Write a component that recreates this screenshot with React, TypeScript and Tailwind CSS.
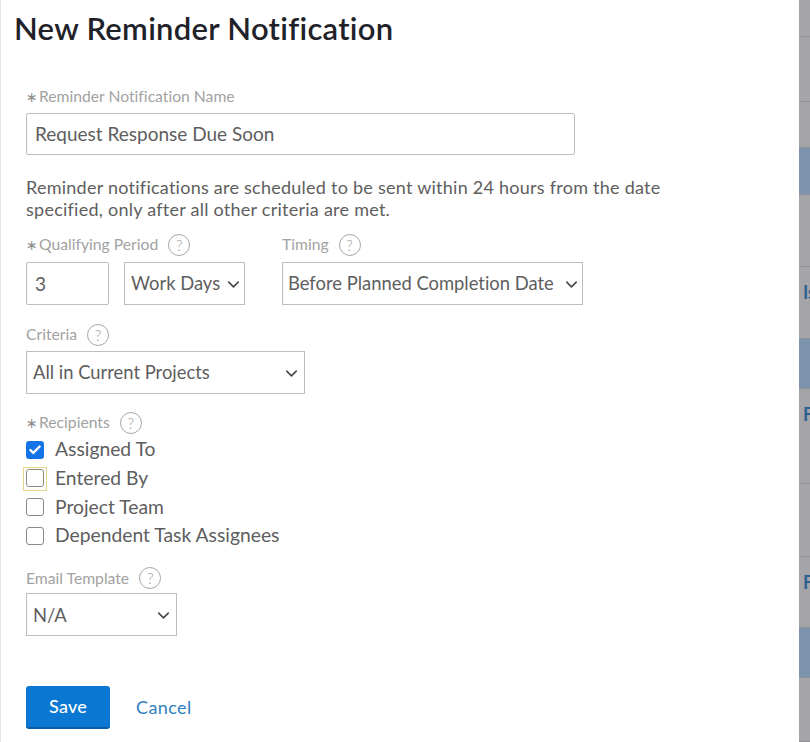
import { ChevronDown, Check } from "lucide-react";

function Help({ className = "" }: { className?: string }) {
  return (
    <span className={"flex h-[22px] w-[22px] shrink-0 items-center justify-center rounded-full border border-[#a8a8a8] text-[15px] leading-none font-light text-[#9a9a9a] " + className}>
      ?
    </span>
  );
}

function Label({ text, required, help = true }: { text: string; required?: boolean; help?: boolean }) {
  return (
    <div className="flex h-[22px] items-center whitespace-nowrap text-[15.7px] leading-none text-[#a2a2a2]">
      {required && <span className="mr-[4px] w-[9px] font-['DejaVu_Sans',sans-serif] text-[14px] text-[#8c8c8c]">∗</span>}
      <span>{text}</span>
      {help && <Help className="ml-[10px]" />}
    </div>
  );
}

function Select({ value, className, pad }: { value: string; className: string; pad: string }) {
  return (
    <div className={"flex h-[43px] items-center justify-between border border-[#bdbdbd] bg-white pt-[1px] text-[18.4px] whitespace-nowrap text-[#5e5e5e] " + pad + " " + className}>
      <span>{value}</span>
      <ChevronDown size={19} strokeWidth={2} className="text-[#484848]" />
    </div>
  );
}

function CheckRow({ label, checked, focused }: { label: string; checked?: boolean; focused?: boolean }) {
  return (
    <div className="flex h-[28.6px] items-center text-[19.3px] whitespace-nowrap text-[#5e5e5e]">
      <span className={"flex h-[24px] w-[24px] -ml-[3px] mr-[8px] items-center justify-center border " + (focused ? "border-[#e8d48a]" : "border-transparent")}>
        {checked ? (
          <span className="-mt-[1px] flex h-[18px] w-[18px] items-center justify-center rounded-[3px] bg-[#1473e6]">
            <Check size={14} strokeWidth={4} className="text-white" />
          </span>
        ) : (
          <span className="-mt-[1px] h-[18px] w-[18px] rounded-[3px] border border-[#8a8a8a] bg-white" />
        )}
      </span>
      <span className="-mt-[1px]">{label}</span>
    </div>
  );
}

export default function App() {
  const rows = [
    { h: "h-[37px]" },
    { h: "h-[65px]" },
    { h: "h-[46px]" },
    { h: "h-[47px]", blue: true },
    { h: "h-[72px]" },
    { h: "h-[72px]", text: "Is" },
    { h: "h-[50px]", blue: true },
    { h: "h-[95px]", text: "F" },
    { h: "h-[73px]" },
    { h: "h-[71px]", text: "F" },
    { h: "h-[50px]", blue: true },
    { h: "h-[64px]" },
  ];

  return (
    <div className="flex h-[742px] w-[810px] overflow-hidden bg-white font-['Lato','Open_Sans',sans-serif] [font-variant-ligatures:none]">
      <div className="h-full w-[799px] shrink-0 border-l border-[#e4e4e4] bg-white pl-[25px] shadow-[1px_0_3px_rgba(0,0,0,0.25)]">
        <h1 className="-ml-[12px] pt-[9px] text-[31px] leading-[38px] font-semibold tracking-[0.28px] whitespace-nowrap text-[#1f2229]">
          New Reminder Notification
        </h1>

        <div className="mt-[39px]">
          <Label text="Reminder Notification Name" required help={false} />
          <div className="mt-[5px] flex h-[42px] w-[549px] items-center rounded-[2px] border border-[#bdbdbd] px-[8px] pt-[1px] text-[19px] text-[#5e5e5e]">
            Request Response Due Soon
          </div>
        </div>

        <p className="mt-[21px] w-[660px] text-[18px] leading-[22px] tracking-[0.25px] text-[#5e5e5e]">
          Reminder notifications are scheduled to be sent within 24 hours from the date specified, only after all other criteria are met.
        </p>

        <div className="mt-[14px] flex">
          <div>
            <Label text="Qualifying Period" required />
            <div className="mt-[6px] flex gap-[15px]">
              <div className="flex h-[43px] w-[83px] items-center rounded-[2px] border border-[#bdbdbd] px-[8px] pt-[1px] text-[19px] text-[#5e5e5e]">3</div>
              <Select value="Work Days" className="w-[121px]" pad="pl-[6px] pr-[1px]" />
            </div>
          </div>
          <div className="ml-[37px]">
            <Label text="Timing" />
            <div className="mt-[6px]">
              <Select value="Before Planned Completion Date" className="w-[301px]" pad="pl-[5px] pr-[1px]" />
            </div>
          </div>
        </div>

        <div className="mt-[19px]">
          <Label text="Criteria" />
          <div className="mt-[5px]">
            <Select value="All in Current Projects" className="w-[279px]" pad="pl-[6px] pr-[3px]" />
          </div>
        </div>

        <div className="mt-[18px]">
          <Label text="Recipients" required />
          <div className="mt-[2px]">
            <CheckRow label="Assigned To" checked />
            <CheckRow label="Entered By" focused />
            <CheckRow label="Project Team" />
            <CheckRow label="Dependent Task Assignees" />
          </div>
        </div>

        <div className="mt-[17px]">
          <Label text="Email Template" />
          <div className="mt-[4px]">
            <Select value="N/A" className="w-[151px]" pad="pl-[6px] pr-[3px]" />
          </div>
        </div>

        <div className="mt-[50px] flex items-center">
          <button className="h-[43px] w-[84px] rounded-[3px] border-b-2 border-[#0a5ca8] bg-[#0a78d2] text-[18px] font-medium tracking-[0.2px] text-white">
            Save
          </button>
          <a className="ml-[26px] text-[18px] tracking-[0.4px] text-[#2f80c0]">Cancel</a>
        </div>
      </div>

      <div className="flex h-full flex-1 flex-col">
        {rows.map((r, i) => (
          <div
            key={i}
            className={r.h + " shrink-0 overflow-hidden border-b border-[#8f8f94] pl-[4px] text-[18px] leading-[50px] font-bold text-[#2f5f8f] " + (r.blue ? "bg-[#7b93ad]" : "bg-[#a4a4a9]")}
          >
            {r.text}
          </div>
        ))}
      </div>
    </div>
  );
}
